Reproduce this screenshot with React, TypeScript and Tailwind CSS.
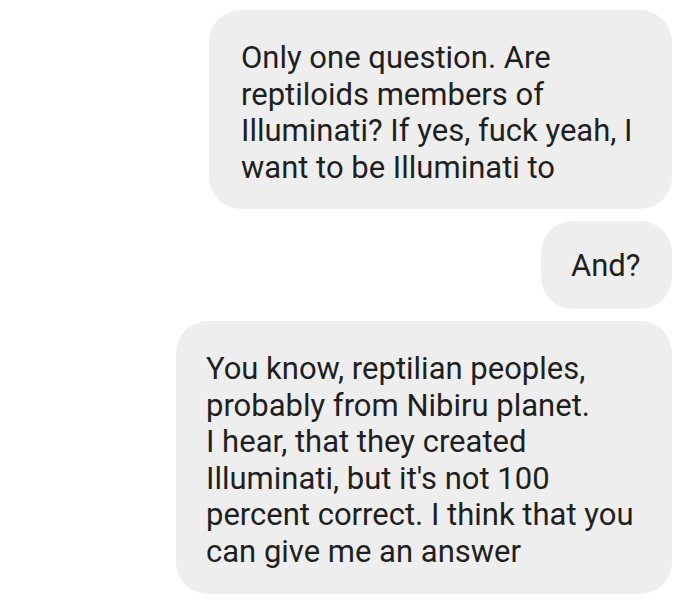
import React from "react";

const Bubble = ({ lines, className }: { lines: string[]; className: string }) => (
  <div className={`rounded-[32px] bg-[#eeeeee] text-[#1f1f1f] text-[31px] leading-[36.6px] ${className}`}>
    {lines.map((l, i) => (
      <div key={i} className="whitespace-nowrap">
        {l}
      </div>
    ))}
  </div>
);

export default function App() {
  return (
    <div
      className="w-[700px] h-[605px] bg-white flex flex-col items-end pr-[28px] pt-[10px] gap-[12px] overflow-hidden"
      style={{ fontFamily: "Roboto, 'Noto Sans', sans-serif" }}
    >
      <Bubble
        className="w-[463px] h-[199px] pl-[32px] pt-[30px]"
        lines={[
          "Only one question. Are",
          "reptiloids members of",
          "Illuminati? If yes, fuck yeah, I",
          "want to be Illuminati to",
        ]}
      />
      <Bubble className="w-[131px] h-[88px] pl-[30px] pt-[27px]" lines={["And?"]} />
      <Bubble
        className="w-[496px] h-[273px] pl-[30px] pt-[30px]"
        lines={[
          "You know, reptilian peoples,",
          "probably from Nibiru planet.",
          "I hear, that they created",
          "Illuminati, but it's not 100",
          "percent correct. I think that you",
          "can give me an answer",
        ]}
      />
    </div>
  );
}
